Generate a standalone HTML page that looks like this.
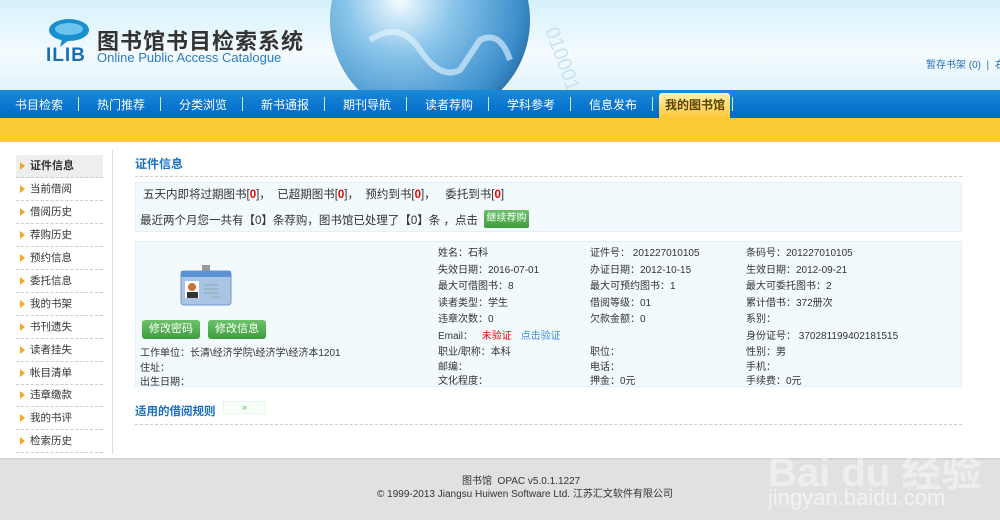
<!DOCTYPE html>
<html><head><meta charset="utf-8"><style>
*{margin:0;padding:0;box-sizing:border-box}
body{width:1000px;height:520px;overflow:hidden;background:#fff;font-family:"Liberation Sans","Noto Sans CJK SC",sans-serif;font-size:12px;color:#333;position:relative}
.a{position:absolute;white-space:nowrap}
#hdr{position:absolute;left:0;top:0;width:1000px;height:90px;background:linear-gradient(#d6f1fb,#f4fbfe 60%,#e3f4fb)}
#nav{position:absolute;left:0;top:90px;width:1000px;height:28px;background:linear-gradient(#1a8ad8,#0067c8)}
#yel{position:absolute;left:0;top:118px;width:1000px;height:24px;background:#fccb33}
.nv{position:absolute;top:96px;color:#fff;font-size:12px}
.sep{position:absolute;top:97px;width:1px;height:14px;background:#cfe6f8}
.sb{position:absolute;left:16px;width:87px;height:23px;border-bottom:1px dashed #ccc;font-size:10.5px;line-height:22px;padding-left:14px;color:#333}
.sb:before{content:"";position:absolute;left:4px;top:7px;border-left:5px solid #f5a623;border-top:4px solid transparent;border-bottom:4px solid transparent}
.r{position:absolute;font-size:10px;white-space:nowrap;color:#333}
.btn{position:absolute;top:320px;height:19px;width:58px;background:linear-gradient(#6cc26a,#3f9c3e);color:#fff;border-radius:3px;font-size:11px;text-align:center;line-height:19px}
.red{color:#e00;font-weight:bold}
</style></head><body>
<div id="hdr"></div>
<svg class="a" style="left:310px;top:0" width="300" height="90"><defs><radialGradient id="g" cx="35%" cy="40%" r="75%"><stop offset="0" stop-color="#f4fbff"/><stop offset=".35" stop-color="#8cc6ea"/><stop offset=".8" stop-color="#3d8fcc"/><stop offset="1" stop-color="#1e5f98"/></radialGradient></defs><circle cx="120" cy="20" r="100" fill="url(#g)"/><path d="M60 40 Q90 20 110 50 T150 70 L170 40 Q190 30 200 60" stroke="#e8f6ff" stroke-width="6" fill="none" opacity=".6"/><text x="235" y="30" fill="#c9e3f0" font-size="20" transform="rotate(70 235 30)">010001</text></svg>
<svg class="a" style="left:47px;top:18px" width="44" height="30"><ellipse cx="22" cy="12" rx="20" ry="11" fill="#1a8fd0"/><ellipse cx="22" cy="11" rx="14" ry="6" fill="#6cc4ee"/><path d="M15 21 L13 29 L22 22Z" fill="#1a8fd0"/></svg>
<div class="a" style="left:46px;top:45px;font-size:19px;font-weight:bold;color:#1a6fb0;letter-spacing:1px">ILIB</div>
<div class="a" style="left:97px;top:24px;font-size:22px;font-weight:bold;color:#333;letter-spacing:1px">图书馆书目检索系统</div>
<div class="a" style="left:97px;top:50px;font-size:13px;color:#2a7cc0">Online Public Access Catalogue</div>
<div class="a" style="left:926px;top:56px;font-size:10px;color:#2a6fb5">暂存书架 (0) &nbsp;|&nbsp; 右</div>
<div id="nav"></div>
<div style="position:absolute;left:659px;top:93px;width:71px;height:25px;background:linear-gradient(#fff1b0,#fcc838);border-radius:3px 3px 0 0"></div>
<div class="nv" style="left:15px">书目检索</div><div class="sep" style="left:78px"></div>
<div class="nv" style="left:97px">热门推荐</div><div class="sep" style="left:160px"></div>
<div class="nv" style="left:179px">分类浏览</div><div class="sep" style="left:242px"></div>
<div class="nv" style="left:261px">新书通报</div><div class="sep" style="left:324px"></div>
<div class="nv" style="left:343px">期刊导航</div><div class="sep" style="left:406px"></div>
<div class="nv" style="left:425px">读者荐购</div><div class="sep" style="left:488px"></div>
<div class="nv" style="left:507px">学科参考</div><div class="sep" style="left:570px"></div>
<div class="nv" style="left:589px">信息发布</div><div class="sep" style="left:652px"></div>
<div class="nv" style="left:665px;color:#5a4300;font-weight:bold">我的图书馆</div><div class="sep" style="left:732px"></div>
<div id="yel"></div>
<div style="position:absolute;left:112px;top:150px;width:1px;height:304px;background:#e0e0e0"></div>
<div class="sb" style="top:155px;background:#eee;font-weight:bold;font-size:11px">证件信息</div>
<div class="sb" style="top:178px">当前借阅</div>
<div class="sb" style="top:201px">借阅历史</div>
<div class="sb" style="top:224px">荐购历史</div>
<div class="sb" style="top:247px">预约信息</div>
<div class="sb" style="top:270px">委托信息</div>
<div class="sb" style="top:293px">我的书架</div>
<div class="sb" style="top:316px">书刊遗失</div>
<div class="sb" style="top:339px">读者挂失</div>
<div class="sb" style="top:362px">帐目清单</div>
<div class="sb" style="top:384px">违章缴款</div>
<div class="sb" style="top:407px">我的书评</div>
<div class="sb" style="top:430px">检索历史</div>
<div class="a" style="left:135px;top:155px;font-size:12px;font-weight:bold;color:#1a6fc0">证件信息</div>
<div style="position:absolute;left:135px;top:176px;width:827px;border-top:1px dashed #ccc"></div>
<div style="position:absolute;left:135px;top:182px;width:827px;height:50px;background:#f3fafd;border:1px solid #e2f1f8"></div>
<div class="a" style="left:143px;top:186px;font-size:11.5px">五天内即将过期图书[<span class="red">0</span>]， &nbsp;已超期图书[<span class="red">0</span>]， &nbsp;预约到书[<span class="red">0</span>]， &nbsp; 委托到书[<span class="red">0</span>]</div>
<div class="a" style="left:140px;top:212px;font-size:11.5px">最近两个月您一共有【0】条荐购，图书馆已处理了【0】条 ，点击</div>
<div class="a" style="left:484px;top:210px;width:45px;height:18px;background:linear-gradient(#6cc26a,#3f9c3e);color:#fff;font-size:10px;line-height:18px;text-align:center;border-radius:2px">继续荐购</div>
<div style="position:absolute;left:135px;top:241px;width:827px;height:146px;background:#f3fafd;border:1px solid #e2f1f8"></div>
<svg class="a" style="left:180px;top:265px" width="52" height="42"><rect x="22" y="0" width="8" height="7" fill="#999"/><rect x="1" y="6" width="50" height="34" rx="3" fill="#a9c4e4" stroke="#6f97cc"/><rect x="1" y="6" width="50" height="6" fill="#5d93d6"/><rect x="5" y="16" width="14" height="17" fill="#fff"/><circle cx="12" cy="22" r="4" fill="#c8733a"/><rect x="7" y="27" width="11" height="6" fill="#333"/><path d="M24 20h14M24 24h14M24 28h14M32 32h8" stroke="#8aa" /></svg>
<div class="btn" style="left:142px">修改密码</div>
<div class="btn" style="left:208px">修改信息</div>
<div class="r" style="left:140px;top:344px">工作单位：长清\经济学院\经济学\经济本1201</div>
<div class="r" style="left:140px;top:359px">住址：</div>
<div class="r" style="left:140px;top:373px">出生日期：</div>
<div class="r" style="left:438px;top:244px">姓名：石科</div><div class="r" style="left:590px;top:244px">证件号： 201227010105</div><div class="r" style="left:746px;top:244px">条码号：201227010105</div>
<div class="r" style="left:438px;top:261px">失效日期：2016-07-01</div><div class="r" style="left:590px;top:261px">办证日期：2012-10-15</div><div class="r" style="left:746px;top:261px">生效日期：2012-09-21</div>
<div class="r" style="left:438px;top:277px">最大可借图书：8</div><div class="r" style="left:590px;top:277px">最大可预约图书：1</div><div class="r" style="left:746px;top:277px">最大可委托图书：2</div>
<div class="r" style="left:438px;top:294px">读者类型：学生</div><div class="r" style="left:590px;top:294px">借阅等级：01</div><div class="r" style="left:746px;top:294px">累计借书：372册次</div>
<div class="r" style="left:438px;top:310px">违章次数：0</div><div class="r" style="left:590px;top:310px">欠款金额：0</div><div class="r" style="left:746px;top:310px">系别：</div>
<div class="r" style="left:438px;top:327px">Email： <span style="color:#e00;margin-left:6px">未验证</span> <span style="color:#3c8ce0;margin-left:6px">点击验证</span></div><div class="r" style="left:746px;top:327px">身份证号： 370281199402181515</div>
<div class="r" style="left:438px;top:343px">职业/职称：本科</div><div class="r" style="left:590px;top:343px">职位：</div><div class="r" style="left:746px;top:343px">性别：男</div>
<div class="r" style="left:438px;top:358px">邮编：</div><div class="r" style="left:590px;top:358px">电话：</div><div class="r" style="left:746px;top:358px">手机：</div>
<div class="r" style="left:438px;top:372px">文化程度：</div><div class="r" style="left:590px;top:372px">押金：0元</div><div class="r" style="left:746px;top:372px">手续费：0元</div>
<div class="a" style="left:135px;top:403px;font-size:11.5px;font-weight:bold;color:#1a6fc0">适用的借阅规则</div>
<div class="a" style="left:223px;top:401px;width:43px;height:13px;border:1px solid #e6f5e6;background:#f8fff8;color:#4b4;font-size:9px;text-align:center;line-height:11px">»</div>
<div style="position:absolute;left:135px;top:424px;width:827px;border-top:1px dashed #ccc"></div>
<div style="position:absolute;left:0;top:458px;width:1000px;height:62px;background:#e1e1e1;border-top:2px solid #d4d4d4"></div>
<div class="a" style="left:462px;top:472px;font-size:10px;color:#333">图书馆 &nbsp;OPAC v5.0.1.1227</div>
<div class="a" style="left:377px;top:485px;font-size:10px;color:#333">© 1999-2013 Jiangsu Huiwen Software Ltd. 江苏汇文软件有限公司</div>
<div class="a" style="left:768px;top:440px;font-size:40px;font-weight:bold;color:#fff;opacity:.45">Bai du 经验</div>
<div class="a" style="left:768px;top:485px;font-size:22px;color:#fff;opacity:.6">jingyan.baidu.com</div>
</body></html>
